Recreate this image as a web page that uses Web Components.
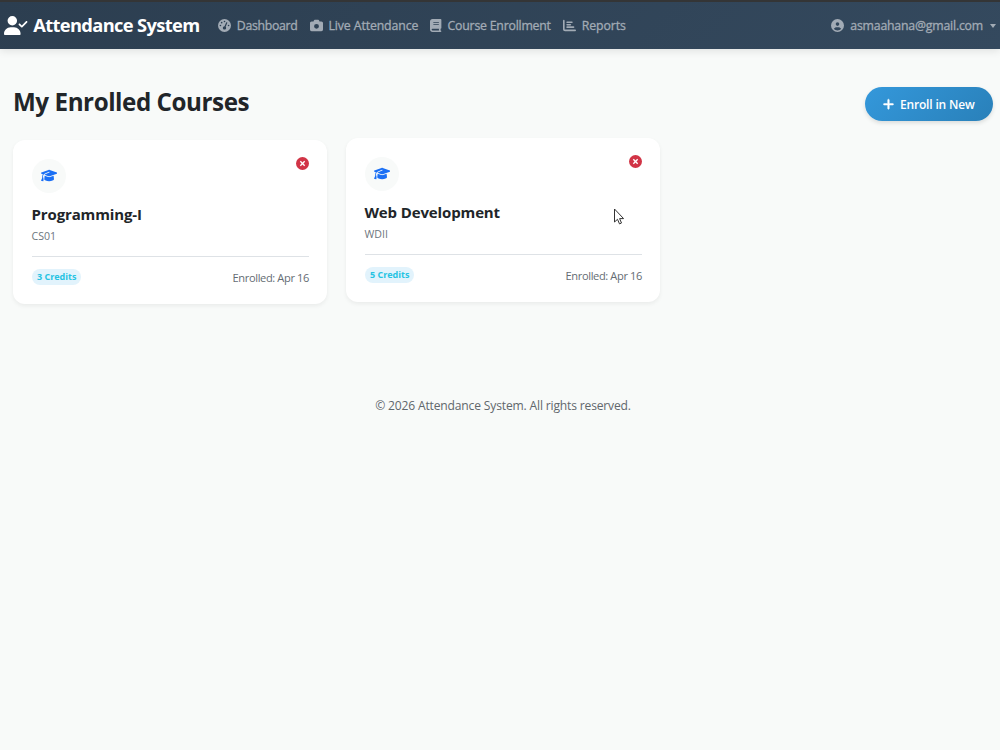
<!DOCTYPE html>
<html lang="en">
<head>
<meta charset="utf-8">
<title>Attendance System</title>
<style>
  body {
    margin: 0;
    min-height: 100vh;
    background: #f8faf9;
    color: #212529;
    font-family: "Open Sans", "Noto Sans", sans-serif;
    overflow: hidden;
  }
</style>
</head>
<body>
<attendance-app></attendance-app>

<script>
const ICONS = {
  userCheck: ["0 0 640 512", "M96 128a128 128 0 1 1 256 0A128 128 0 1 1 96 128zM0 482.3C0 383.8 79.8 304 178.3 304h91.4C368.2 304 448 383.8 448 482.3c0 16.4-13.3 29.7-29.7 29.7H29.7C13.3 512 0 498.7 0 482.3zM625 177L497 305c-9.4 9.4-24.6 9.4-33.9 0l-64-64c-9.4-9.4-9.4-24.6 0-33.9s24.6-9.4 33.9 0l47 47L591 143c9.4-9.4 24.6-9.4 33.9 0s9.4 24.6 0 33.9z"],
  gauge: ["0 0 512 512", "M0 256a256 256 0 1 1 512 0A256 256 0 1 1 0 256zM288 96a32 32 0 1 0 -64 0 32 32 0 1 0 64 0zM256 416c35.3 0 64-28.7 64-64c0-17.4-6.9-33.1-18.1-44.6L366 161.7c5.3-12.1-.2-26.3-12.3-31.6s-26.3 .2-31.6 12.3L257.9 288c-.6 0-1.3 0-1.9 0c-35.3 0-64 28.7-64 64s28.7 64 64 64zM176 144a32 32 0 1 0 -64 0 32 32 0 1 0 64 0zM96 288a32 32 0 1 0 0-64 32 32 0 1 0 0 64zm352-32a32 32 0 1 0 -64 0 32 32 0 1 0 64 0z"],
  camera: ["0 0 512 512", "M149.1 64.8L138.7 96H64C28.7 96 0 124.7 0 160V416c0 35.3 28.7 64 64 64H448c35.3 0 64-28.7 64-64V160c0-35.3-28.7-64-64-64H373.3L362.9 64.8C356.4 45.2 338.1 32 317.4 32H194.6c-20.7 0-39 13.2-45.5 32.8zM256 192a96 96 0 1 1 0 192 96 96 0 1 1 0-192z"],
  book: ["0 0 448 512", "M96 0C43 0 0 43 0 96V416c0 53 43 96 96 96H384h32c17.7 0 32-14.3 32-32s-14.3-32-32-32V384c17.7 0 32-14.3 32-32V32c0-17.7-14.3-32-32-32H384 96zm0 384H352v64H96c-17.7 0-32-14.3-32-32s14.3-32 32-32zm32-240c0-8.8 7.2-16 16-16H336c8.8 0 16 7.2 16 16s-7.2 16-16 16H144c-8.8 0-16-7.2-16-16zm16 48H336c8.8 0 16 7.2 16 16s-7.2 16-16 16H144c-8.8 0-16-7.2-16-16s7.2-16 16-16z"],
  chart: ["0 0 512 512", "M32 32c17.7 0 32 14.3 32 32V400c0 8.8 7.2 16 16 16H480c17.7 0 32 14.3 32 32s-14.3 32-32 32H80c-44.2 0-80-35.8-80-80V64C0 46.3 14.3 32 32 32zm96 96c0-17.7 14.3-32 32-32l192 0c17.7 0 32 14.3 32 32s-14.3 32-32 32H160c-17.7 0-32-14.3-32-32zm32 64H288c17.7 0 32 14.3 32 32s-14.3 32-32 32H160c-17.7 0-32-14.3-32-32s14.3-32 32-32zm0 96H416c17.7 0 32 14.3 32 32s-14.3 32-32 32H160c-17.7 0-32-14.3-32-32s14.3-32 32-32z"],
  user: ["0 0 512 512", "M399 384.2C376.9 345.8 335.4 320 288 320H224c-47.4 0-88.9 25.8-111 64.2c35.2 39.2 86.2 63.8 143 63.8s107.8-24.7 143-63.8zM0 256a256 256 0 1 1 512 0A256 256 0 1 1 0 256zm256 16a72 72 0 1 0 0-144 72 72 0 1 0 0 144z"],
  plus: ["0 0 448 512", "M256 80c0-17.7-14.3-32-32-32s-32 14.3-32 32V224H48c-17.7 0-32 14.3-32 32s14.3 32 32 32H192V432c0 17.7 14.3 32 32 32s32-14.3 32-32V288H400c17.7 0 32-14.3 32-32s-14.3-32-32-32H256V80z"],
  times: ["0 0 10 10", "M1.2 2.6L2.6 1.2 5 3.6 7.4 1.2 8.8 2.6 6.4 5 8.8 7.4 7.4 8.8 5 6.4 2.6 8.8 1.2 7.4 3.6 5z"],
  cap: ["0 0 640 512", "M320 32c-8.1 0-16.1 1.4-23.7 4.1L15.8 137.4C6.3 140.9 0 149.9 0 160s6.3 19.1 15.8 22.6l57.9 20.9C57.3 229.3 48 259.8 48 291.9v28.1c0 28.4-10.8 57.7-22.3 80.8c-6.5 13-13.9 25.8-22.5 37.6C0 442.7-.9 448.3 .9 453.4s6 8.9 11.2 10.2l64 16c4.2 1.1 8.7 .3 12.4-2s6.3-6.1 7.1-10.4c8.6-42.8 4.3-81.2-2.1-108.7C90.3 344.3 86 329.8 80 316.5V291.9c0-30.2 10.2-58.7 27.9-81.5c12.9-15.5 29.6-28 49.2-35.7l157-61.7c8.2-3.2 17.5 .8 20.7 9s-.8 17.5-9 20.7l-157 61.7c-12.4 4.9-23.3 12.4-32.2 21.6l159.6 57.6c7.6 2.7 15.6 4.1 23.7 4.1s16.1-1.4 23.7-4.1L624.2 182.6c9.5-3.4 15.8-12.5 15.8-22.6s-6.3-19.1-15.8-22.6L343.7 36.1C336.1 33.4 328.1 32 320 32zM128 408c0 35.3 86 72 192 72s192-36.7 192-72L496.7 262.6 354.5 314c-11.1 4-22.8 6-34.5 6s-23.5-2-34.5-6L143.3 262.6 128 408z"],
};

class AppIcon extends HTMLElement {
  connectedCallback() {
    const [box, path] = ICONS[this.getAttribute("name")];
    const root = this.attachShadow({ mode: "open" });
    root.innerHTML = `
      <style>
        :host { display: block; flex: none; height: 13px; }
        svg { display: block; height: 100%; }
      </style>
      <svg viewBox="${box}" fill="currentColor" fill-rule="evenodd"><path d="${path}"/></svg>`;
  }
}

class NavLink extends HTMLElement {
  connectedCallback() {
    const root = this.attachShadow({ mode: "open" });
    root.innerHTML = `
      <style>
        :host {
          display: flex;
          align-items: center;
          gap: 6px;
          color: #a2abb5;
          font-size: 12.3px;
          line-height: 20px;
          white-space: nowrap;
          -webkit-text-stroke: 0.3px;
        }
        app-icon { margin-top: -1px; }
        .caret {
          margin-left: 1px;
          border: 3.2px solid transparent;
          border-top: 4px solid;
          border-bottom: 0;
        }
      </style>
      <app-icon name="${this.getAttribute("icon")}"></app-icon>
      <span><slot></slot></span>
      ${this.hasAttribute("dropdown") ? '<i class="caret"></i>' : ""}`;
  }
}

class NavBar extends HTMLElement {
  connectedCallback() {
    const root = this.attachShadow({ mode: "open" });
    root.innerHTML = `
      <style>
        :host {
          display: flex;
          align-items: center;
          box-sizing: border-box;
          height: 49px;
          padding: 1px 4px 0 4px;
          border-top: 2px solid #343536;
          background: linear-gradient(135deg, #2c3e50, #34495e);
          box-shadow: 0 2px 8px rgba(0, 0, 0, 0.1);
        }
        .brand {
          display: flex;
          align-items: center;
          gap: 5.5px;
          color: #fff;
          font-size: 18.3px;
          font-weight: 700;
          line-height: 24px;
          white-space: nowrap;
          letter-spacing: -0.64px;
        }
        .brand app-icon { height: 19px; margin-top: -2px; }
        .brand span { margin-top: -2px; }
        nav { display: flex; gap: 12px; margin: 0 auto 0 18.3px; }
      </style>
      <div class="brand"><app-icon name="userCheck"></app-icon><span>Attendance System</span></div>
      <nav>
        <nav-link icon="gauge" style="letter-spacing: -0.3px">Dashboard</nav-link>
        <nav-link icon="camera" style="letter-spacing: -0.12px">Live Attendance</nav-link>
        <nav-link icon="book" style="letter-spacing: -0.22px">Course Enrollment</nav-link>
        <nav-link icon="chart" style="letter-spacing: -0.1px">Reports</nav-link>
      </nav>
      <nav-link icon="user" dropdown style="letter-spacing: -0.2px">asmaahana@gmail.com</nav-link>`;
  }
}

class CourseCard extends HTMLElement {
  connectedCallback() {
    const root = this.attachShadow({ mode: "open" });
    root.innerHTML = `
      <style>
        :host {
          display: block;
          box-sizing: border-box;
          height: 164px;
          padding: 19px 18px 0 18.5px;
          border-radius: 12px;
          background: #fff;
          box-shadow: 0 2px 4px rgba(0, 0, 0, 0.06);
        }
        :host([raised]) { margin-top: -2px; height: 163.5px; }
        .top { display: flex; justify-content: space-between; align-items: flex-start; }
        .avatar, .remove { display: grid; place-items: center; border-radius: 50%; }
        .avatar { width: 34px; height: 34px; background: #f8faf9; color: #1a6ff5; }
        .avatar app-icon { margin-left: 1px; margin-top: -1px; }
        .remove { width: 13px; height: 13px; margin-top: -2px; background: #d13446; color: #fff; }
        .remove app-icon { height: 7px; }
        h2 {
          margin: 10px 0 0;
          font-size: 15px;
          font-weight: 700;
          line-height: 22px;
          letter-spacing: -0.13px;
        }
        .code { color: #6c757d; font-size: 10.6px; line-height: 16px; margin-top: 3px; }
        .bottom {
          display: flex;
          justify-content: space-between;
          align-items: center;
          margin-top: 12px;
          padding-top: 12px;
          border-top: 1px solid #dee2e6;
        }
        .badge {
          padding: 0 5px 0 5.5px;
          border-radius: 8px;
          background: #e2f3fc;
          color: #27c3e3;
          font-size: 9px;
          font-weight: 700;
          line-height: 16px;
        }
        .date {
          position: relative;
          top: 0.5px;
          color: #656c73;
          font-size: 11.1px;
          line-height: 16px;
          letter-spacing: -0.38px;
        }
      </style>
      <div class="top">
        <div class="avatar"><app-icon name="cap"></app-icon></div>
        <div class="remove"><app-icon name="times"></app-icon></div>
      </div>
      <h2><slot></slot></h2>
      <div class="code">${this.getAttribute("code")}</div>
      <div class="bottom">
        <span class="badge">${this.getAttribute("credits")} Credits</span>
        <span class="date">Enrolled: ${this.getAttribute("enrolled")}</span>
      </div>`;
  }
}

class MousePointer extends HTMLElement {
  connectedCallback() {
    const root = this.attachShadow({ mode: "open" });
    root.innerHTML = `
      <style>
        :host { position: absolute; left: 613px; top: 208px; }
        svg { display: block; }
      </style>
      <svg width="12" height="18" viewBox="0 0 12 18">
        <path d="M1.5 1v13l3-2.7 2 4.6 2-.9-1.9-4.4h4z" fill="#fff" stroke="#333" stroke-width="1"/>
      </svg>`;
  }
}

class AttendanceApp extends HTMLElement {
  connectedCallback() {
    const root = this.attachShadow({ mode: "open" });
    root.innerHTML = `
      <style>
        :host { display: block; }
        main { padding: 38px 7px 0 13px; }
        header { display: flex; justify-content: space-between; align-items: flex-start; }
        h1 {
          margin: -2px 0 0;
          font-size: 24.2px;
          font-weight: 700;
          line-height: 34px;
          letter-spacing: -0.44px;
        }
        .enroll {
          display: flex;
          align-items: center;
          gap: 6px;
          box-sizing: border-box;
          width: 128px;
          height: 34px;
          padding: 0 0 0 18px;
          border: 0;
          border-radius: 17px;
          background: linear-gradient(135deg, #3498db, #2980b9);
          box-shadow: 0 2px 4px rgba(0, 0, 0, 0.12);
          color: #fff;
          font: 600 12px "Open Sans", sans-serif;
          letter-spacing: -0.17px;
          white-space: nowrap;
        }
        .enroll app-icon { height: 12.5px; stroke: #fff; stroke-width: 20; }
        .courses {
          display: grid;
          grid-template-columns: 314px 314px;
          gap: 19px;
          margin-top: 19px;
        }
        footer {
          margin: 93px 0 0 6px;
          text-align: center;
          color: #61676c;
          font-size: 12.1px;
          line-height: 18px;
          letter-spacing: -0.17px;
        }
      </style>
      <nav-bar></nav-bar>
      <main>
        <header>
          <h1>My Enrolled Courses</h1>
          <button class="enroll"><app-icon name="plus"></app-icon><span>Enroll in New</span></button>
        </header>
        <section class="courses">
          <course-card code="CS01" credits="3" enrolled="Apr 16">Programming-I</course-card>
          <course-card code="WDII" credits="5" enrolled="Apr 16" raised>Web Development</course-card>
        </section>
      </main>
      <footer>© 2026 Attendance System. All rights reserved.</footer>
      <mouse-pointer></mouse-pointer>`;
  }
}

customElements.define("app-icon", AppIcon);
customElements.define("nav-link", NavLink);
customElements.define("nav-bar", NavBar);
customElements.define("course-card", CourseCard);
customElements.define("mouse-pointer", MousePointer);
customElements.define("attendance-app", AttendanceApp);
</script>
</body>
</html>
